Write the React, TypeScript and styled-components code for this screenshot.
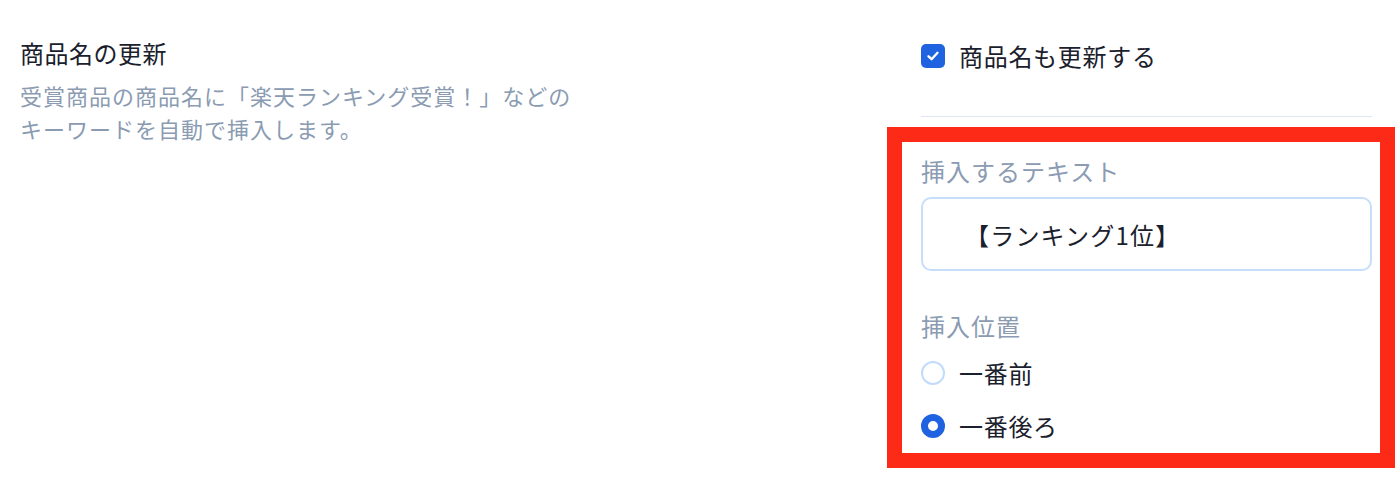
import { useState } from "react"
import styled, { createGlobalStyle } from "styled-components"

const GlobalStyle = createGlobalStyle`
    body {
        margin: 0;
        background: #ffffff;
        font-family: "Noto Sans CJK JP", "Noto Sans", sans-serif;
        color: #1a202c;
    }
`

type Position = "front" | "back"

export default function App() {
    const [updateName, setUpdateName] = useState(true)
    const [text, setText] = useState("【ランキング1位】")
    const [position, setPosition] = useState<Position>("back")

    return (
        <>
            <GlobalStyle />
            <Page>
                <Intro>
                    <Title>商品名の更新</Title>
                    <Description>
                        受賞商品の商品名に「楽天ランキング受賞！」などの
                        <br />
                        キーワードを自動で挿入します。
                    </Description>
                </Intro>

                <Settings>
                    <Top>
                        <CheckRow>
                            <CheckBox
                                $checked={updateName}
                                onClick={() => setUpdateName(!updateName)}
                            >
                                {updateName && (
                                    <svg width="14" height="14" viewBox="0 0 14 14">
                                        <path
                                            d="M2.5 7.3 L5.6 10.2 L11.5 3.8"
                                            fill="none"
                                            stroke="#ffffff"
                                            strokeWidth="2.4"
                                            strokeLinecap="round"
                                            strokeLinejoin="round"
                                        />
                                    </svg>
                                )}
                            </CheckBox>
                            <OptionText>商品名も更新する</OptionText>
                        </CheckRow>
                        <Divider />
                    </Top>

                    <Highlight>
                        <FieldLabel>挿入するテキスト</FieldLabel>
                        <TextInput
                            value={text}
                            onChange={(e) => setText(e.target.value)}
                        />

                        <FieldLabel $spaced>挿入位置</FieldLabel>
                        <RadioRow onClick={() => setPosition("front")}>
                            <Radio $checked={position === "front"} />
                            <OptionText>一番前</OptionText>
                        </RadioRow>
                        <RadioRow $second onClick={() => setPosition("back")}>
                            <Radio $checked={position === "back"} />
                            <OptionText>一番後ろ</OptionText>
                        </RadioRow>
                    </Highlight>
                </Settings>
            </Page>
        </>
    )
}

const Page = styled.div`
    display: grid;
    grid-template-columns: 887px 508px;
    height: 486px;
`

const Intro = styled.div`
    padding: 35px 0 0 20px;
`

const Title = styled.div`
    font-size: 24px;
    line-height: 36px;
    letter-spacing: 0.5px;
    color: #1a202c;
`

const Description = styled.div`
    margin-top: 8px;
    font-size: 22px;
    line-height: 33px;
    letter-spacing: 1px;
    color: #8a9bb2;
`

const Settings = styled.div`
    display: flex;
    flex-direction: column;
`

const Top = styled.div`
    padding: 38px 23px 0 34px;
`

const CheckRow = styled.div`
    display: flex;
    align-items: center;
    gap: 14px;
    height: 36px;
`

const CheckBox = styled.div<{ $checked: boolean }>`
    width: 24px;
    height: 24px;
    box-sizing: border-box;
    border-radius: 5px;
    display: flex;
    align-items: center;
    justify-content: center;
    cursor: pointer;
    background: ${({ $checked }) => ($checked ? "#1f63e0" : "#ffffff")};
    border: ${({ $checked }) => ($checked ? "none" : "2px solid #c2dbfb")};
`

const OptionText = styled.span`
    font-size: 24px;
    line-height: 36px;
    letter-spacing: 0.7px;
    color: #1a202c;
`

const Divider = styled.div`
    margin-top: 42px;
    height: 1px;
    background: #dde6f2;
`

const Highlight = styled.div`
    margin-top: 10px;
    border: 15px solid #fd2a18;
    padding: 11px 8px 9px 19px;
    display: flex;
    flex-direction: column;
`

const FieldLabel = styled.div<{ $spaced?: boolean }>`
    font-size: 24px;
    line-height: 36px;
    letter-spacing: 1px;
    color: #8a9bb2;
    margin-top: ${({ $spaced }) => ($spaced ? "37px" : "0")};
`

const TextInput = styled.input`
    margin-top: 8px;
    box-sizing: border-box;
    width: 100%;
    height: 74px;
    padding: 0 20px 0 42px;
    border: 2px solid #c7defa;
    border-radius: 10px;
    font-family: "Noto Sans CJK JP", "Noto Sans", sans-serif;
    font-size: 24px;
    letter-spacing: 1.2px;
    color: #1a202c;
    outline: none;
`

const RadioRow = styled.div<{ $second?: boolean }>`
    display: flex;
    align-items: center;
    gap: 14px;
    height: 36px;
    cursor: pointer;
    margin-top: ${({ $second }) => ($second ? "17px" : "11px")};
`

const Radio = styled.div<{ $checked: boolean }>`
    width: 24px;
    height: 24px;
    box-sizing: border-box;
    border-radius: 50%;
    background: #ffffff;
    border: ${({ $checked }) =>
        $checked ? "7.5px solid #1f63e0" : "2px solid #c2dbfb"};
`
